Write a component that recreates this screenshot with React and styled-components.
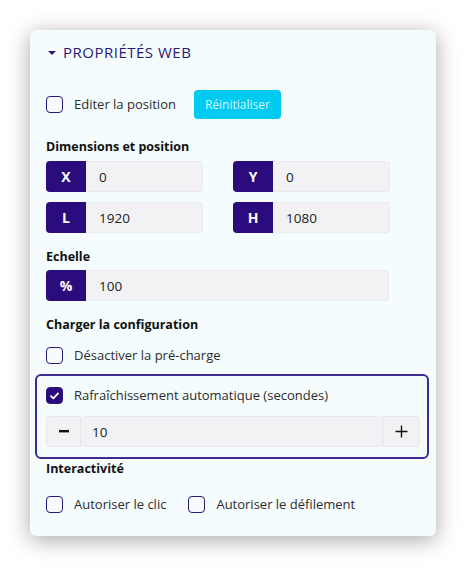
import React, { useState } from 'react'
import styled, { createGlobalStyle } from 'styled-components'

const GlobalStyle = createGlobalStyle`
  html, body {
    margin: 0;
    padding: 0;
    background: #ffffff;
    font-family: "Open Sans", "Noto Sans", sans-serif;
  }
`

const Page = styled.div`
  width: 465px;
  height: 568px;
  padding: 30px 29px 0 30px;
  box-sizing: border-box;
`

const Card = styled.div`
  width: 406px;
  height: 506px;
  box-sizing: border-box;
  background: #f4fcfd;
  border-radius: 6px;
  box-shadow: 0 4px 22px rgba(0, 0, 0, 0.35);
  padding: 10px 16px 0 16px;
  display: flex;
  flex-direction: column;
`

const Header = styled.div`
  display: flex;
  align-items: center;
  gap: 7px;
  height: 24px;
  margin-left: 2px;
  color: #2b1777;
  font-size: 15px;
  letter-spacing: 0.5px;
`

const Caret = styled.span`
  width: 0;
  height: 0;
  border-left: 4px solid transparent;
  border-right: 4px solid transparent;
  border-top: 4px solid #2b1777;
  margin-top: 1px;
`

const Row = styled.div`
  display: flex;
  align-items: center;
  gap: ${({ $gap }) => $gap || 0}px;
  margin-top: ${({ $mt }) => $mt || 0}px;
`

const CheckLabel = styled.label`
  display: flex;
  align-items: center;
  gap: 11px;
  height: 17px;
  line-height: 17px;
  font-size: 13px;
  color: #2c2c2c;
  cursor: pointer;
  margin-right: ${({ $mr }) => $mr || 0}px;
`

const Box = styled.span`
  width: 17px;
  height: 17px;
  flex: none;
  box-sizing: border-box;
  border-radius: 4px;
  border: 1.5px solid #2b1777;
  background: ${({ $on }) => ($on ? '#2a0c7c' : 'transparent')};
  display: flex;
  align-items: center;
  justify-content: center;
`

const ResetButton = styled.button`
  background: #00c9f2;
  color: #d6f6ff;
  border: none;
  border-radius: 4px;
  height: 29px;
  padding: 0 11px;
  font-family: inherit;
  font-size: 12px;
  cursor: pointer;
`

const SectionTitle = styled.div`
  font-weight: 700;
  font-size: 12.5px;
  line-height: 16px;
  color: #111;
  margin-top: ${({ $mt }) => $mt}px;
`

const Grid = styled.div`
  display: grid;
  grid-template-columns: 157px 157px;
  column-gap: 30px;
  row-gap: 10px;
  margin-top: 6px;
`

const Field = styled.div`
  display: flex;
  height: 31px;
  width: ${({ $w }) => $w || 157}px;
  border-radius: 4px;
  overflow: hidden;
  background: #f2f2f4;
  box-shadow: inset 0 0 0 1px #ebebef;
`

const Addon = styled.div`
  width: 40px;
  flex: none;
  background: #2a0c7c;
  color: #fff;
  font-weight: 700;
  font-size: 14px;
  display: flex;
  align-items: center;
  justify-content: center;
`

const Value = styled.div`
  flex: 1;
  display: flex;
  align-items: center;
  padding-left: 13px;
  font-size: 13.5px;
  color: #222;
`

const Highlight = styled.div`
  margin: 10px -9px 0 -11px;
  border: 2px solid #3d2b92;
  border-radius: 6px;
  padding: 11px 7px 10px 9px;
  display: flex;
  flex-direction: column;
  gap: 12px;
`

const Stepper = styled.div`
  display: flex;
  height: 31px;
`

const StepButton = styled.button`
  width: ${({ $w }) => $w}px;
  flex: none;
  border: 1px solid #e8e8ec;
  background: #f2f2f4;
  border-radius: ${({ $side }) => ($side === 'left' ? '4px 0 0 4px' : '0 4px 4px 0')};
  display: flex;
  align-items: center;
  justify-content: center;
  padding: 0;
  cursor: pointer;
`

const StepValue = styled.div`
  flex: 1;
  background: #f2f2f4;
  border-top: 1px solid #e8e8ec;
  border-bottom: 1px solid #e8e8ec;
  border-radius: 4px;
  display: flex;
  align-items: center;
  padding-left: 11px;
  font-size: 13.5px;
  color: #222;
`

const Check = ({ on }) => (
  <Box $on={on}>
    {on && (
      <svg width="9" height="8" viewBox="0 0 9 8">
        <path d="M1 4.2 L3.4 6.4 L8 1.4" fill="none" stroke="#fff" strokeWidth="1.8" strokeLinecap="round" strokeLinejoin="round" />
      </svg>
    )}
  </Box>
)

const CheckItem = ({ label, on, mr }) => (
  <CheckLabel $mr={mr}>
    <Check on={on} />
    {label}
  </CheckLabel>
)

const App = () => {
  const [refresh] = useState(10)

  return (
    <Page>
      <GlobalStyle />
      <Card>
        <Header>
          <Caret />
          PROPRIÉTÉS WEB
        </Header>

        <Row $mt={26}>
          <CheckItem label="Editer la position" mr={18} />
          <ResetButton>Réinitialiser</ResetButton>
        </Row>

        <SectionTitle $mt={20}>Dimensions et position</SectionTitle>
        <Grid>
          <Field><Addon>X</Addon><Value>0</Value></Field>
          <Field><Addon>Y</Addon><Value>0</Value></Field>
          <Field><Addon>L</Addon><Value>1920</Value></Field>
          <Field><Addon>H</Addon><Value>1080</Value></Field>
        </Grid>

        <SectionTitle $mt={16}>Echelle</SectionTitle>
        <Row $mt={5}>
          <Field $w={343}><Addon>%</Addon><Value>100</Value></Field>
        </Row>

        <SectionTitle $mt={16}>Charger la configuration</SectionTitle>
        <Row $mt={14}>
          <CheckItem label="Désactiver la pré-charge" />
        </Row>

        <Highlight>
          <CheckItem label="Rafraîchissement automatique (secondes)" on />
          <Stepper>
            <StepButton $w={35} $side="left">
              <svg width="10" height="3" viewBox="0 0 10 3"><rect width="10" height="2.4" fill="#111" /></svg>
            </StepButton>
            <StepValue>{refresh}</StepValue>
            <StepButton $w={38} $side="right">
              <svg width="13" height="13" viewBox="0 0 13 13"><path d="M6.5 0.5 V12.5 M0.5 6.5 H12.5" stroke="#111" strokeWidth="1.4" /></svg>
            </StepButton>
          </Stepper>
        </Highlight>

        <SectionTitle $mt={2}>Interactivité</SectionTitle>
        <Row $mt={19}>
          <CheckItem label="Autoriser le clic" mr={22} />
          <CheckItem label="Autoriser le défilement" />
        </Row>
      </Card>
    </Page>
  )
}

export default App
